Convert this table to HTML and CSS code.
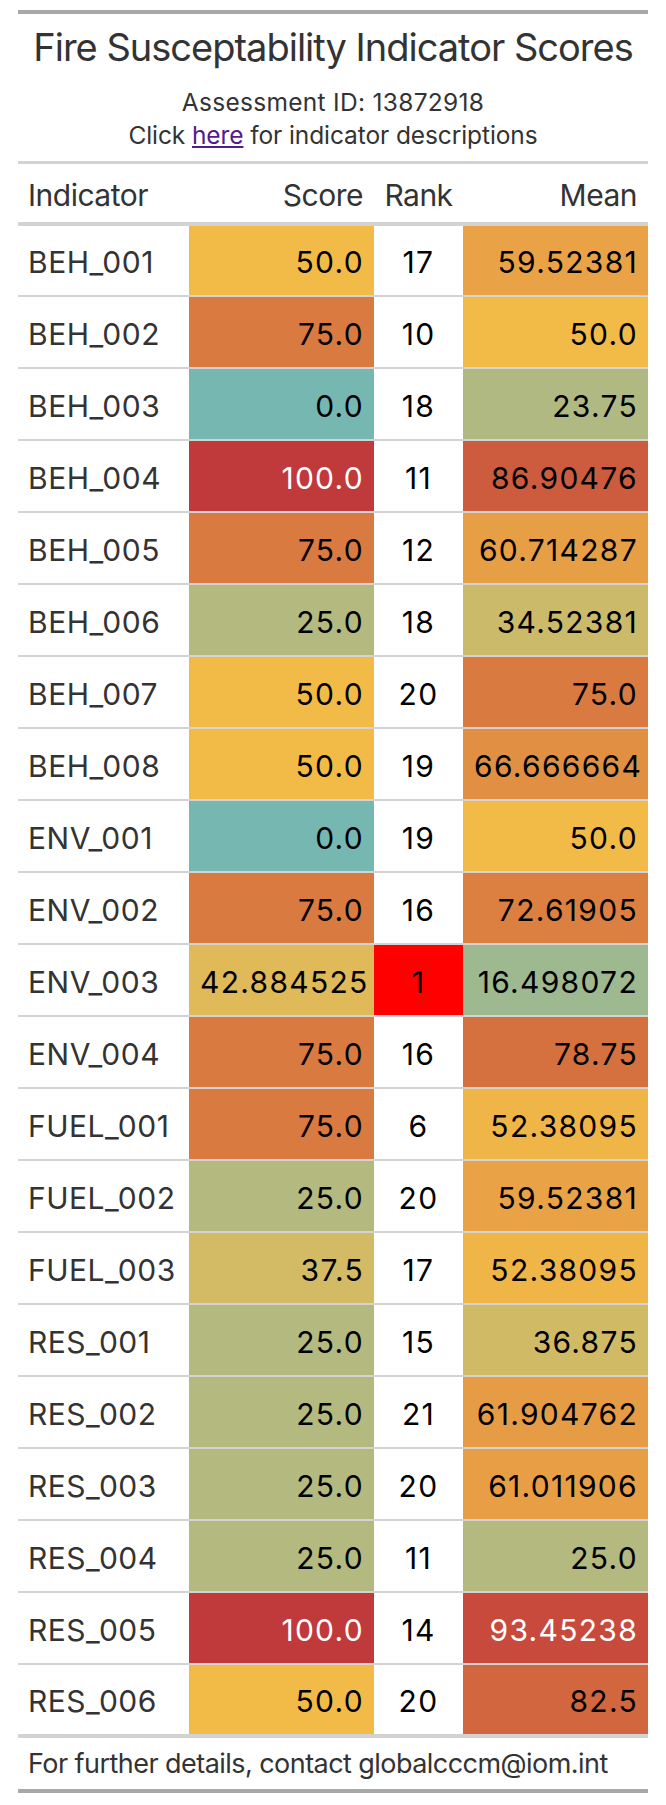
FILE: index.html
```html
<!DOCTYPE html>
<html lang="en">
<head>
<meta charset="utf-8">
<title>Fire Susceptability Indicator Scores</title>
<link rel="stylesheet" href="styles.css">
</head>
<body>
<div class="gt">
  <div class="heading">
    <div class="title">Fire Susceptability Indicator Scores</div>
    <div class="subtitle"><span class="id">Assessment ID: 13872918</span><br>Click <a href="#" class="link">here</a> for indicator descriptions</div>
  </div>
  <table class="tbl">
    <colgroup>
      <col class="c-ind"><col class="c-score"><col class="c-rank"><col class="c-mean">
    </colgroup>
    <thead>
      <tr><th class="left">Indicator</th><th class="right">Score</th><th class="center">Rank</th><th class="right">Mean</th></tr>
    </thead>
    <tbody>
      <tr><td class="left">BEH_001</td><td class="right num" style="background:#F2BB48">50.0</td><td class="center num">17</td><td class="right num" style="background:#E9A245">59.52381</td></tr>
      <tr><td class="left">BEH_002</td><td class="right num" style="background:#D97A40">75.0</td><td class="center num">10</td><td class="right num" style="background:#F2BB48">50.0</td></tr>
      <tr><td class="left">BEH_003</td><td class="right num" style="background:#76B7B2">0.0</td><td class="center num">18</td><td class="right num" style="background:#B0B982">23.75</td></tr>
      <tr><td class="left">BEH_004</td><td class="right num light" style="background:#C0393B">100.0</td><td class="center num">11</td><td class="right num" style="background:#CD5B3E">86.90476</td></tr>
      <tr><td class="left">BEH_005</td><td class="right num" style="background:#D97A40">75.0</td><td class="center num">12</td><td class="right num" style="background:#E79F45">60.714287</td></tr>
      <tr><td class="left">BEH_006</td><td class="right num" style="background:#B3B97F">25.0</td><td class="center num">18</td><td class="right num" style="background:#CBBA6A">34.52381</td></tr>
      <tr><td class="left">BEH_007</td><td class="right num" style="background:#F2BB48">50.0</td><td class="center num">20</td><td class="right num" style="background:#D97A40">75.0</td></tr>
      <tr><td class="left">BEH_008</td><td class="right num" style="background:#F2BB48">50.0</td><td class="center num">19</td><td class="right num" style="background:#E19043">66.666664</td></tr>
      <tr><td class="left">ENV_001</td><td class="right num" style="background:#76B7B2">0.0</td><td class="center num">19</td><td class="right num" style="background:#F2BB48">50.0</td></tr>
      <tr><td class="left">ENV_002</td><td class="right num" style="background:#D97A40">75.0</td><td class="center num">16</td><td class="right num" style="background:#DB8041">72.61905</td></tr>
      <tr><td class="left">ENV_003</td><td class="right num" style="background:#E0BA58">42.884525</td><td class="center num" style="background:#FF0000">1</td><td class="right num" style="background:#9EB890">16.498072</td></tr>
      <tr><td class="left">ENV_004</td><td class="right num" style="background:#D97A40">75.0</td><td class="center num">16</td><td class="right num" style="background:#D5703F">78.75</td></tr>
      <tr><td class="left">FUEL_001</td><td class="right num" style="background:#D97A40">75.0</td><td class="center num">6</td><td class="right num" style="background:#F0B547">52.38095</td></tr>
      <tr><td class="left">FUEL_002</td><td class="right num" style="background:#B3B97F">25.0</td><td class="center num">20</td><td class="right num" style="background:#E9A245">59.52381</td></tr>
      <tr><td class="left">FUEL_003</td><td class="right num" style="background:#D3BA64">37.5</td><td class="center num">17</td><td class="right num" style="background:#F0B547">52.38095</td></tr>
      <tr><td class="left">RES_001</td><td class="right num" style="background:#B3B97F">25.0</td><td class="center num">15</td><td class="right num" style="background:#D1BA65">36.875</td></tr>
      <tr><td class="left">RES_002</td><td class="right num" style="background:#B3B97F">25.0</td><td class="center num">21</td><td class="right num" style="background:#E69C44">61.904762</td></tr>
      <tr><td class="left">RES_003</td><td class="right num" style="background:#B3B97F">25.0</td><td class="center num">20</td><td class="right num" style="background:#E79E45">61.011906</td></tr>
      <tr><td class="left">RES_004</td><td class="right num" style="background:#B3B97F">25.0</td><td class="center num">11</td><td class="right num" style="background:#B3B97F">25.0</td></tr>
      <tr><td class="left">RES_005</td><td class="right num light" style="background:#C0393B">100.0</td><td class="center num">14</td><td class="right num light" style="background:#C74A3C">93.45238</td></tr>
      <tr><td class="left">RES_006</td><td class="right num" style="background:#F2BB48">50.0</td><td class="center num">20</td><td class="right num" style="background:#D2673F">82.5</td></tr>
    </tbody>
  </table>
  <div class="source">For further details, contact globalcccm@iom.int</div>
</div>
</body>
</html>
```

FILE: styles.css
```css
html, body {
  margin: 0;
  padding: 0;
  background: #ffffff;
}

body {
  font-family: Inter, "Noto Sans", "Liberation Sans", sans-serif;
  color: #333333;
}

.gt {
  width: 630px;
  margin: 10px 0 0 18px;
  border-top: 4px solid #A8A8A8;
  border-bottom: 4px solid #A8A8A8;
}

.heading {
  text-align: center;
  padding: 10px 0 9px;
  border-bottom: 3px solid #D3D3D3;
}

.title {
  font-size: 38px;
  line-height: 46px;
  letter-spacing: -1px;
}

.subtitle {
  margin-top: 16px;
  font-size: 24.5px;
  line-height: 33px;
  letter-spacing: -0.1px;
}

.id {
  letter-spacing: 0.3px;
}

.link {
  color: #551A8B;
  text-decoration: underline;
}

.tbl {
  width: 630px;
  table-layout: fixed;
  border-collapse: collapse;
  border-spacing: 0;
}

.c-ind { width: 171px; }
.c-score { width: 185px; }
.c-rank { width: 89px; }
.c-mean { width: 185px; }

.tbl th {
  font-weight: normal;
  font-size: 30px;
  height: 60px;
  box-sizing: border-box;
  padding: 0 11px 9px;
  vertical-align: bottom;
  border-bottom: 4px solid #D3D3D3;
  color: #333333;
  letter-spacing: -0.5px;
}

.tbl td {
  font-size: 30px;
  height: 72px;
  box-sizing: border-box;
  padding: 3px 11px 0;
  vertical-align: middle;
  border-bottom: 2px solid #D3D3D3;
  color: #333333;
  white-space: nowrap;
  letter-spacing: 0.5px;
}

.tbl tbody tr:last-child td {
  border-bottom: 4px solid #D3D3D3;
}

.tbl td.num {
  color: #000000;
  letter-spacing: 1.3px;
}

.tbl td.right.num {
  padding-right: 10px;
}

.tbl td.light {
  color: #ffffff;
}

.left { text-align: left; }
.right { text-align: right; }
.center { text-align: center; }

.tbl th.left, .tbl td.left { padding-left: 10px; }
.tbl th.center, .tbl td.center { padding-left: 0; padding-right: 0; }

.source {
  font-size: 27px;
  line-height: 36px;
  padding: 8px 10px 7px;
  letter-spacing: -0.55px;
}
```
